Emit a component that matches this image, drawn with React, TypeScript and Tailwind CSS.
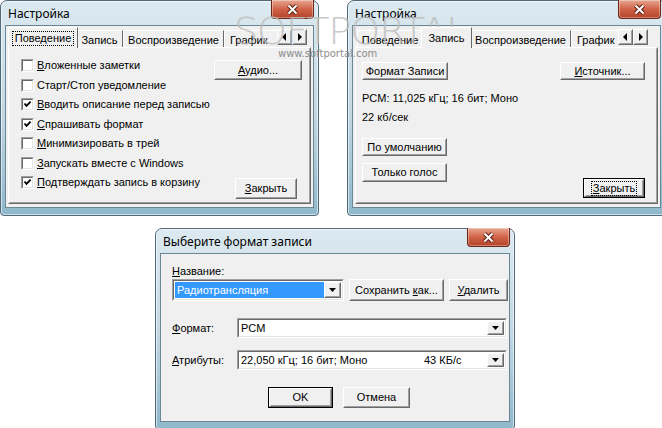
import clsx from "clsx"
import type { ReactNode } from "react"

const TEXT = "font-['Liberation_Sans',Arial,sans-serif] text-[11px] leading-none whitespace-nowrap text-black"

function CloseButton() {
  return (
    <div className="-mt-px flex h-[19px] w-[43px] shrink-0 items-center justify-center rounded-b-[4px] border border-t-0 border-[#6b2516] bg-linear-to-b from-[#e8a692] via-[#d06348] to-[#b3432a] shadow-[inset_0_0_0_1px_rgba(255,255,255,0.35)]">
      <svg width="13" height="11" viewBox="0 0 13 11">
        <path d="M2.5 1.5 L10.5 9.5 M10.5 1.5 L2.5 9.5" stroke="#5a2014" strokeWidth="4" />
        <path d="M2.5 1.5 L10.5 9.5 M10.5 1.5 L2.5 9.5" stroke="white" strokeWidth="2" />
      </svg>
    </div>
  )
}

function Win({ title, className, children }: { title: string; className: string; children: ReactNode }) {
  return (
    <div
      className={clsx(
        "absolute flex flex-col rounded-t-[7px] rounded-b-[4px] border border-[#4f6b7b] bg-linear-to-b from-[#dce9f0] via-[#c6d9e4] to-[#8fb8ca] px-[4px] pb-[7px] shadow-[inset_0_0_0_1px_rgba(255,255,255,0.55)]",
        className,
      )}
    >
      <div className="flex h-[24px] shrink-0 items-start justify-between">
        <span className="pl-[3px] pt-[7px] font-['Noto_Sans',sans-serif] text-[12px] leading-none text-black">{title}</span>
        <CloseButton />
      </div>
      <div className="flex min-h-0 flex-1 flex-col border border-[#6a8797] bg-[#f0f0f0]">{children}</div>
    </div>
  )
}

function Btn({ className, children, def, focus }: { className: string; children: ReactNode; def?: boolean; focus?: boolean }) {
  return (
    <div className={clsx("flex shrink-0", def && "border border-black", className)}>
      <div className="flex flex-1 border border-t-white border-l-white border-r-[#696969] border-b-[#696969]">
        <div className={clsx("flex flex-1 items-center justify-center border border-t-[#f0f0f0] border-l-[#f0f0f0] border-r-[#a0a0a0] border-b-[#a0a0a0] bg-[#f0f0f0]", TEXT)}>
          {focus ? <span className="border border-dotted border-black px-[1px] py-[1px]">{children}</span> : children}
        </div>
      </div>
    </div>
  )
}

function Check({ on }: { on?: boolean }) {
  return (
    <div className="h-[13px] w-[13px] shrink-0 border border-t-[#a0a0a0] border-l-[#a0a0a0] border-r-white border-b-white">
      <div className="h-full w-full border border-t-[#696969] border-l-[#696969] border-r-[#e3e3e3] border-b-[#e3e3e3] bg-white">
        {on && (
          <svg width="9" height="9" viewBox="0 0 9 9" className="block">
            <path d="M1.5 3.5 L3.5 5.8 L7.6 1.6" stroke="black" strokeWidth="1.9" fill="none" />
          </svg>
        )}
      </div>
    </div>
  )
}

function Arrow({ dir }: { dir: "l" | "r" }) {
  return (
    <div className="flex h-[16px] w-[15px] border border-t-white border-l-white border-r-[#696969] border-b-[#696969]">
      <div className="flex flex-1 items-center justify-center border border-r-[#a0a0a0] border-b-[#a0a0a0] border-t-[#f0f0f0] border-l-[#f0f0f0] bg-[#f0f0f0]">
        <svg width="5" height="8" viewBox="0 0 5 8">
          {dir === "l" ? <path d="M4 0 L4 8 L0 4 Z" fill="black" /> : <path d="M1 0 L1 8 L5 4 Z" fill="black" />}
        </svg>
      </div>
    </div>
  )
}

const TABS = [
  { label: "Поведение", w: "w-[66px]", ws: "w-[70px]" },
  { label: "Запись", w: "w-[47px]", ws: "w-[51px]" },
  { label: "Воспроизведение", w: "w-[101px]", ws: "w-[105px]" },
]

function TabStrip({ active, focus, arrows }: { active: number; focus?: boolean; arrows: string }) {
  return (
    <div className={clsx("flex h-[19px] shrink-0 items-end pl-[2px]", TEXT)}>
      {TABS.map((t, i) =>
        i === active ? (
          <div
            key={t.label}
            className={clsx(
              "relative z-10 -mx-[2px] -mb-px flex h-[21px] shrink-0 justify-center border border-b-0 border-t-white border-l-white border-r-[#696969] bg-[#f0f0f0] pt-[3px]",
              t.ws,
            )}
          >
            <span className={clsx("h-[15px] px-[2px] pt-[1px]", focus ? "border border-dotted border-black" : "border border-transparent")}>{t.label}</span>
          </div>
        ) : (
          <div key={t.label} className={clsx("flex h-[17px] shrink-0 justify-center border border-b-0 border-t-white border-l-white border-r-[#696969] pt-[4px]", t.w)}>
            {t.label}
          </div>
        ),
      )}
      <div className="flex h-[17px] min-w-0 flex-1 overflow-hidden border-t border-l border-t-white border-l-white pl-[5px] pt-[4px]">График</div>
      <div className={clsx("mb-[2px] flex self-end", arrows)}>
        <Arrow dir="l" />
        <Arrow dir="r" />
      </div>
    </div>
  )
}

function Page({ children, className }: { children: ReactNode; className?: string }) {
  return (
    <div className="flex flex-1 border border-t-white border-l-white border-r-[#696969] border-b-[#696969]">
      <div className={clsx("flex flex-1 border border-t-transparent border-l-transparent border-r-[#a0a0a0] border-b-[#a0a0a0]", className)}>{children}</div>
    </div>
  )
}

const OPTIONS: { on: boolean; u: string; rest: string }[] = [
  { on: false, u: "В", rest: "ложенные заметки" },
  { on: false, u: "", rest: "Старт/Стоп уведомление" },
  { on: true, u: "В", rest: "водить описание перед записью" },
  { on: true, u: "С", rest: "прашивать формат" },
  { on: false, u: "М", rest: "инимизировать в трей" },
  { on: false, u: "З", rest: "апускать вместе с Windows" },
  { on: true, u: "П", rest: "одтверждать запись в корзину" },
]

function Combo({ className, children, selected }: { className: string; children: ReactNode; selected?: boolean }) {
  return (
    <div className={clsx("flex shrink-0 border border-t-[#a0a0a0] border-l-[#a0a0a0] border-r-white border-b-white", className)}>
      <div className="flex flex-1 border border-t-[#696969] border-l-[#696969] border-r-[#e3e3e3] border-b-[#e3e3e3] bg-white p-px">
        <div className={clsx("flex flex-1 items-center pl-[1px]", TEXT, selected && "bg-[#3399ff] text-white")}>{children}</div>
        <div className="flex w-[17px] border border-t-white border-l-white border-r-[#696969] border-b-[#696969]">
          <div className="flex flex-1 items-center justify-center border border-t-[#f0f0f0] border-l-[#f0f0f0] border-r-[#a0a0a0] border-b-[#a0a0a0] bg-[#f0f0f0]">
            <svg width="7" height="4" viewBox="0 0 7 4">
              <path d="M0 0 L7 0 L3.5 4 Z" fill="black" />
            </svg>
          </div>
        </div>
      </div>
    </div>
  )
}

export default function App() {
  return (
    <div className="relative h-[428px] w-[662px] overflow-hidden bg-white">
      {/* left: Поведение */}
      <Win title="Настройка" className="left-0 top-0 h-[216px] w-[319px]">
        <div className="flex flex-1 flex-col px-[2px] pb-[3px] pt-[2px]">
          <TabStrip active={0} focus arrows="mr-[4px]" />
          <Page>
            <div className={clsx("flex w-[200px] shrink-0 flex-col pl-[11px] pt-[7px]", TEXT)}>
              {OPTIONS.map((o) => (
                <div key={o.rest} className="flex h-[19.5px] items-center gap-[3px]">
                  <Check on={o.on} />
                  <span>
                    <u>{o.u}</u>
                    {o.rest}
                  </span>
                </div>
              ))}
            </div>
            <div className="flex flex-1 flex-col items-end justify-between pb-[3px] pr-[7px] pt-[11px]">
              <Btn className="h-[20px] w-[88px]">
                <span>
                  <u>А</u>удио...
                </span>
              </Btn>
              <Btn className="mr-[5px] h-[21px] w-[62px]">
                <span>
                  <u>З</u>акрыть
                </span>
              </Btn>
            </div>
          </Page>
        </div>
      </Win>

      {/* right: Запись */}
      <Win title="Настройка" className="left-[347px] top-0 h-[216px] w-[319px]">
        <div className="flex flex-1 flex-col px-[2px] pb-[3px] pt-[2px]">
          <TabStrip active={1} arrows="mr-[10px]" />
          <Page className="flex-col pl-[5px] pr-[11px] pt-[13px]">
            <div className="flex justify-between">
              <Btn className="h-[18px] w-[86px]">Формат Записи</Btn>
              <Btn className="h-[18px] w-[85px]">
                <span>
                  <u>И</u>сточник...
                </span>
              </Btn>
            </div>
            <div className={clsx("pt-[13px]", TEXT)}>PCM: 11,025 кГц; 16 бит; Моно</div>
            <div className={clsx("pt-[8px]", TEXT)}>22 кб/сек</div>
            <Btn className="mt-[15px] h-[18px] w-[85px]">По умолчанию</Btn>
            <div className="flex items-start justify-between">
              <Btn className="mt-[7px] h-[19px] w-[85px]">Только голос</Btn>
              <Btn def focus className="mt-[22px] h-[20px] w-[62px]">
                <span>
                  <u>З</u>акрыть
                </span>
              </Btn>
            </div>
          </Page>
        </div>
      </Win>

      {/* bottom: format dialog */}
      <Win title="Выберите формат записи" className="left-[155px] top-[228px] h-[202px] w-[360px]">
        <div className={clsx("flex flex-col pl-[11px] pt-[12px]", TEXT)}>
          <div>
            <u>Н</u>азвание:
          </div>
          <div className="mt-[2px] flex gap-[5px]">
            <Combo selected className="h-[22px] w-[172px]">
              <span className="pl-px">Радиотрансляция</span>
            </Combo>
            <Btn className="h-[22px] w-[95px]">
              <span>
                Сохранить <u>к</u>ак...
              </span>
            </Btn>
            <Btn className="h-[22px] w-[59px]">
              <span>
                <u>У</u>далить
              </span>
            </Btn>
          </div>
          <div className="mt-[17px] flex items-center">
            <span className="w-[65px]">
              <u>Ф</u>ормат:
            </span>
            <Combo className="h-[20px] w-[270px]">PCM</Combo>
          </div>
          <div className="mt-[12px] flex items-center">
            <span className="w-[65px]">
              <u>А</u>трибуты:
            </span>
            <Combo className="h-[20px] w-[270px]">
              <span className="w-[183px]">22,050 кГц; 16 бит; Моно</span>
              <span>43 КБ/с</span>
            </Combo>
          </div>
          <div className="mt-[17px] flex gap-[10px] pl-[96px]">
            <Btn def className="h-[21px] w-[65px]">
              OK
            </Btn>
            <Btn className="h-[21px] w-[67px]">Отмена</Btn>
          </div>
        </div>
      </Win>

      {/* watermark */}
      <div className="pointer-events-none absolute left-[234px] top-[12px] font-['DejaVu_Sans',sans-serif] text-[38px] font-extralight leading-none tracking-[-1px] text-[#bdbdbd] opacity-80">
        SOFTPORTAL
      </div>
      <div className="pointer-events-none absolute left-[278px] top-[49px] font-['DejaVu_Sans',sans-serif] text-[10px] leading-none text-[#8c8c8c]">
        www.softportal.com
      </div>
    </div>
  )
}
